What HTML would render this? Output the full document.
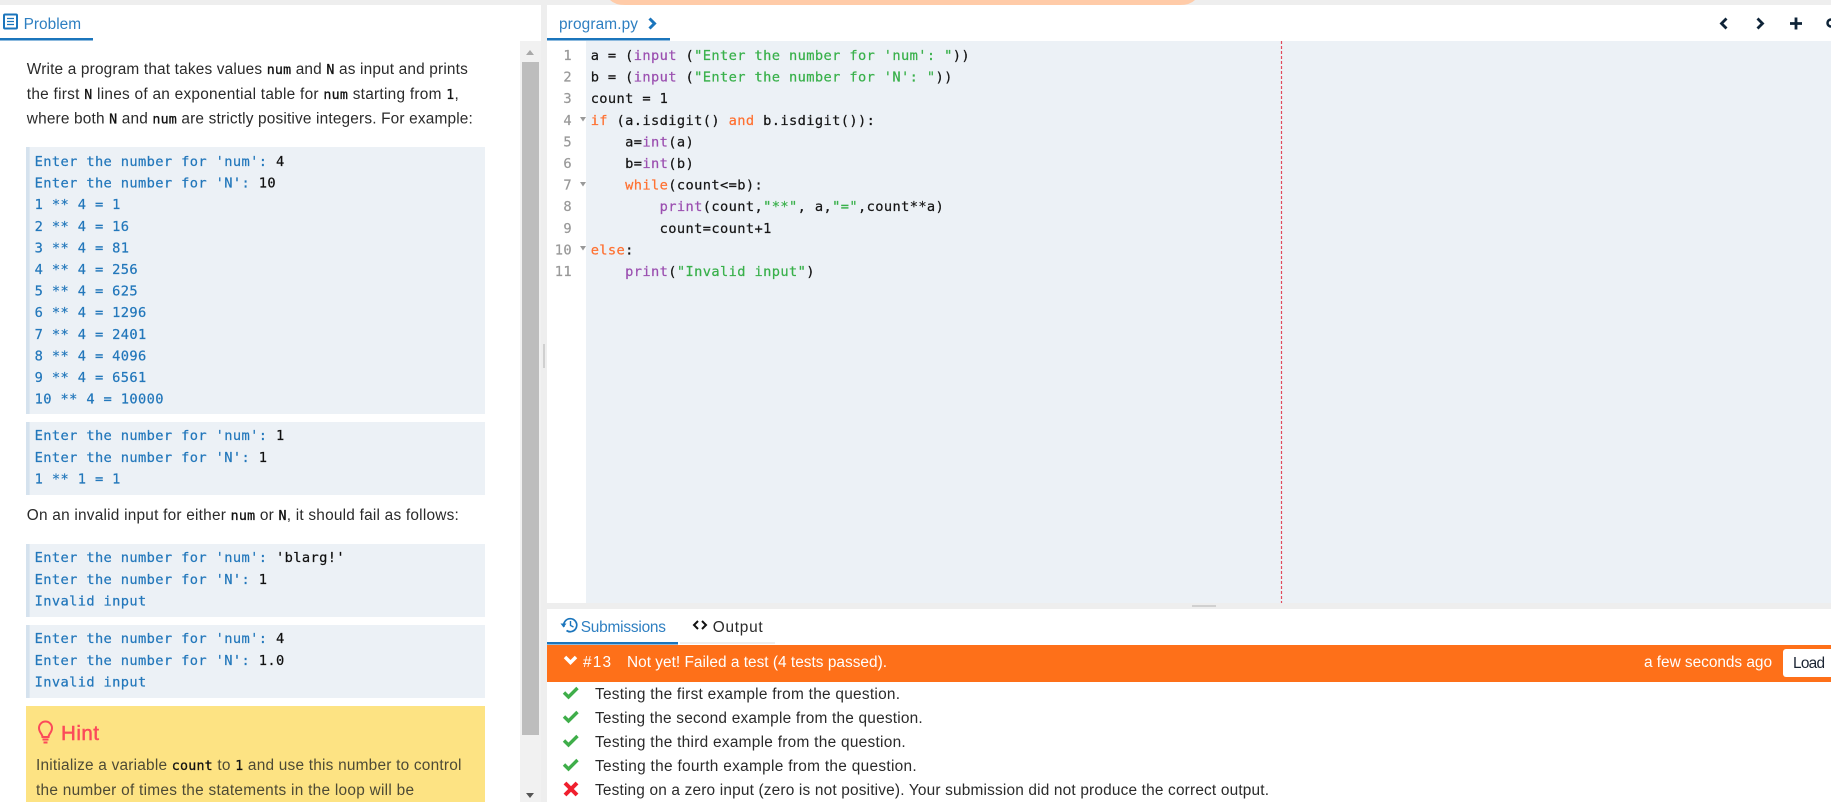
<!DOCTYPE html>
<html><head><meta charset="utf-8"><title>Problem</title>
<style>
html,body{margin:0;padding:0;background:#fff;width:1831px;height:802px;overflow:hidden}
svg{display:block}
text{white-space:pre}
.s{font-family:"Liberation Sans",sans-serif;font-size:15.4px;fill:#2a2a2a}
.c{font-family:"DejaVu Sans Mono",monospace;font-size:13.3px;fill:#111;stroke:#111;stroke-width:.3px}
.m{font-family:"DejaVu Sans Mono",monospace;font-size:13.7px;letter-spacing:.38px;stroke-width:.22px}
.p{fill:#2277bb;stroke:#2277bb}
.v{fill:#111;stroke:#111}
.e{fill:#151515;stroke:#151515}
.k{fill:#ff7030;stroke:#ff7030}
.b{fill:#9b4fb0;stroke:#9b4fb0}
.g{fill:#38b04a;stroke:#38b04a}
.n{fill:#999;stroke:#999;text-anchor:end}
.t{fill:#2e7fc1}
</style></head><body>
<svg xmlns="http://www.w3.org/2000/svg" width="1831" height="802" viewBox="0 0 1831 802">
<rect width="1831" height="802" fill="#fff"/>
<rect width="1831" height="5" fill="#eeeeee"/>
<path d="M610 0H1195Q1190 5 1180 5H625Q615 5 610 0Z" fill="#ffcba8"/>
<rect x="541" y="0" width="6" height="802" fill="#eeeeee"/>
<rect x="520" y="41" width="21" height="761" fill="#f1f1f1"/>
<rect x="522" y="62" width="17" height="673" fill="#bdbdbd"/>
<path d="M526 55l4-5 4 5z" fill="#a8a8a8"/>
<path d="M526 793l4 5 4-5z" fill="#555"/>
<rect x="543" y="344" width="2" height="24" fill="#d0d0d0"/>

<!-- Problem tab -->
<rect x="0" y="38" width="93" height="2.5" fill="#1b75bc"/>
<rect x="4" y="14.5" width="13" height="14" rx="1" fill="none" stroke="#1b75bc" stroke-width="2"/>
<path d="M7 18.5h7M7 21.5h7M7 24.5h7" stroke="#1b75bc" stroke-width="1.2" fill="none"/>
<text class="s t" x="23.6" y="29" textLength="57.5" lengthAdjust="spacing">Problem</text>

<!-- Paragraph -->
<text class="s" x="26.8" y="74" textLength="441" lengthAdjust="spacing">Write a program that takes values <tspan class="c">num</tspan> and <tspan class="c">N</tspan> as input and prints</text>
<text class="s" x="26.8" y="99" textLength="432" lengthAdjust="spacing">the first <tspan class="c">N</tspan> lines of an exponential table for <tspan class="c">num</tspan> starting from <tspan class="c">1</tspan>,</text>
<text class="s" x="26.8" y="123.5" textLength="446" lengthAdjust="spacing">where both <tspan class="c">N</tspan> and <tspan class="c">num</tspan> are strictly positive integers. For example:</text>

<!-- Pre 1 -->
<rect x="26" y="147" width="459" height="267" fill="#ecf1f6"/><rect x="26" y="147" width="3.6" height="267" fill="#d5e2ee"/>
<g class="m p">
<text x="34.6" y="166">Enter the number for 'num': <tspan class="v">4</tspan></text>
<text x="34.6" y="187.6">Enter the number for 'N': <tspan class="v">10</tspan></text>
<text x="34.6" y="209.2">1 ** 4 = 1</text>
<text x="34.6" y="230.8">2 ** 4 = 16</text>
<text x="34.6" y="252.4">3 ** 4 = 81</text>
<text x="34.6" y="274">4 ** 4 = 256</text>
<text x="34.6" y="295.6">5 ** 4 = 625</text>
<text x="34.6" y="317.2">6 ** 4 = 1296</text>
<text x="34.6" y="338.8">7 ** 4 = 2401</text>
<text x="34.6" y="360.4">8 ** 4 = 4096</text>
<text x="34.6" y="382">9 ** 4 = 6561</text>
<text x="34.6" y="403.6">10 ** 4 = 10000</text>
</g>
<!-- Pre 2 -->
<rect x="26" y="422" width="459" height="73" fill="#ecf1f6"/><rect x="26" y="422" width="3.6" height="73" fill="#d5e2ee"/>
<g class="m p">
<text x="34.6" y="440">Enter the number for 'num': <tspan class="v">1</tspan></text>
<text x="34.6" y="462">Enter the number for 'N': <tspan class="v">1</tspan></text>
<text x="34.6" y="483.5">1 ** 1 = 1</text>
</g>
<text class="s" x="26.8" y="520" textLength="432" lengthAdjust="spacing">On an invalid input for either <tspan class="c">num</tspan> or <tspan class="c">N</tspan>, it should fail as follows:</text>
<!-- Pre 3 -->
<rect x="26" y="544" width="459" height="73" fill="#ecf1f6"/><rect x="26" y="544" width="3.6" height="73" fill="#d5e2ee"/>
<g class="m p">
<text x="34.6" y="562">Enter the number for 'num': <tspan class="v">'blarg!'</tspan></text>
<text x="34.6" y="584">Enter the number for 'N': <tspan class="v">1</tspan></text>
<text x="34.6" y="605.5">Invalid input</text>
</g>
<!-- Pre 4 -->
<rect x="26" y="625" width="459" height="73" fill="#ecf1f6"/><rect x="26" y="625" width="3.6" height="73" fill="#d5e2ee"/>
<g class="m p">
<text x="34.6" y="643">Enter the number for 'num': <tspan class="v">4</tspan></text>
<text x="34.6" y="665">Enter the number for 'N': <tspan class="v">1.0</tspan></text>
<text x="34.6" y="686.5">Invalid input</text>
</g>
<!-- Hint -->
<rect x="26" y="706" width="459" height="96" fill="#fde383"/>
<path d="M42.5 737c0-3-3.500-4.500-3.500-9a6.500 6.500 0 0 1 13 0c0 4.500-3.500 6-3.500 9z" fill="none" stroke="#fb4a5a" stroke-width="2"/>
<path d="M42.500 739.500h6M43.500 742.500h4" stroke="#fb4a5a" stroke-width="2" fill="none"/>
<text x="61" y="740" textLength="38" lengthAdjust="spacing" style="font-family:'Liberation Sans',sans-serif;font-size:20.5px;fill:#fb4a5a;stroke:#fb4a5a;stroke-width:.5px">Hint</text>
<text class="s" x="36" y="770" textLength="425.400" lengthAdjust="spacing" style="fill:#4d4a35">Initialize a variable <tspan class="c">count</tspan> to <tspan class="c">1</tspan> and use this number to control</text>
<text class="s" x="36" y="795" textLength="378" lengthAdjust="spacing" style="fill:#4d4a35">the number of times the statements in the loop will be</text>

<!-- Editor -->
<rect x="547" y="38" width="123" height="2.500" fill="#1b75bc"/>
<rect x="547" y="41" width="1284" height="562" fill="#ecf1f6"/>
<rect x="547" y="41" width="39" height="562" fill="#fff"/>
<text class="s t" x="559" y="29" textLength="79" lengthAdjust="spacing">program.py</text>
<path d="M649.500 18.500l5 5-5 5" fill="none" stroke="#1b75bc" stroke-width="3"/>
<path d="M1726.500 18.500l-5 5 5 5M1757.500 18.500l5 5-5 5" fill="none" stroke="#0f2438" stroke-width="2.800"/>
<path d="M1796 17.500v12M1790 23.500h12" fill="none" stroke="#0f2438" stroke-width="2.800"/>
<circle cx="1831" cy="23" r="3.500" fill="none" stroke="#0f2438" stroke-width="2.500"/>
<path d="M1281.500 41V603" stroke="#e24a5c" stroke-width="1.200" stroke-dasharray="3 2"/>
<g class="m n">
<text x="572" y="60">1</text><text x="572" y="81.600">2</text><text x="572" y="103.200">3</text><text x="572" y="124.800">4</text><text x="572" y="146.400">5</text><text x="572" y="168">6</text><text x="572" y="189.600">7</text><text x="572" y="211.200">8</text><text x="572" y="232.800">9</text><text x="572" y="254.400">10</text><text x="572" y="276">11</text>
</g>
<path d="M580 117h6l-3 4.500zM580 182h6l-3 4.500zM580 246h6l-3 4.500z" fill="#999"/>
<g class="m e">
<text x="590.700" y="60">a = (<tspan class="b">input</tspan> (<tspan class="g">"Enter the number for 'num': "</tspan>))</text>
<text x="590.700" y="81.600">b = (<tspan class="b">input</tspan> (<tspan class="g">"Enter the number for 'N': "</tspan>))</text>
<text x="590.700" y="103.200">count = 1</text>
<text x="590.700" y="124.800"><tspan class="k">if</tspan> (a.isdigit() <tspan class="k">and</tspan> b.isdigit()):</text>
<text x="590.700" y="146.400">    a=<tspan class="b">int</tspan>(a)</text>
<text x="590.700" y="168">    b=<tspan class="b">int</tspan>(b)</text>
<text x="590.700" y="189.600">    <tspan class="k">while</tspan>(count&lt;=b):</text>
<text x="590.700" y="211.200">        <tspan class="b">print</tspan>(count,<tspan class="g">"**"</tspan>, a,<tspan class="g">"="</tspan>,count**a)</text>
<text x="590.700" y="232.800">        count=count+1</text>
<text x="590.700" y="254.400"><tspan class="k">else</tspan>:</text>
<text x="590.700" y="276">    <tspan class="b">print</tspan>(<tspan class="g">"Invalid input"</tspan>)</text>
</g>
<rect x="547" y="603" width="1284" height="6" fill="#eeeeee"/>
<rect x="1192" y="605" width="24" height="2" fill="#d0d0d0"/>

<!-- Bottom tabs -->
<rect x="547" y="642" width="131" height="2.500" fill="#1b75bc"/>
<rect x="680" y="642" width="95" height="2" fill="#eeeeee"/>
<path d="M564 627a6.500 6.500 0 1 1 2.500 3.500" fill="none" stroke="#1b75bc" stroke-width="1.700"/>
<path d="M560.500 623.500h6l-3 4z" fill="#1b75bc"/>
<path d="M570.500 621v4.500l3 1.500" fill="none" stroke="#1b75bc" stroke-width="1.400"/>
<text class="s t" x="580.700" y="632" textLength="85.300" lengthAdjust="spacing">Submissions</text>
<path d="M698 621l-4 4 4 4M702 621l4 4-4 4" fill="none" stroke="#111" stroke-width="2"/>
<text class="s" x="712.700" y="632" textLength="50" lengthAdjust="spacing">Output</text>

<rect x="547" y="645" width="1284" height="37" fill="#fe7019"/>
<path d="M565 657l5.500 5.500 5.500-5.500" fill="none" stroke="#fff" stroke-width="3.500"/>
<text class="s" x="583" y="667" textLength="28" lengthAdjust="spacing" style="fill:#fff">#13</text>
<text class="s" x="627" y="667" textLength="260" lengthAdjust="spacing" style="fill:#fff">Not yet! Failed a test (4 tests passed).</text>
<text class="s" x="1644" y="667" textLength="128" lengthAdjust="spacing" style="fill:#fff">a few seconds ago</text>
<rect x="1783" y="649" width="52" height="28" rx="3" fill="#fff"/>
<text class="s" x="1793" y="668" textLength="32" lengthAdjust="spacing" style="fill:#1a2433">Load</text>

<!-- Test results -->
<g fill="none" stroke="#3fae4a" stroke-width="3.400">
<path d="M564 692.500l4.500 4.500 9-9"/><path d="M564 716.500l4.500 4.500 9-9"/><path d="M564 740.500l4.500 4.500 9-9"/><path d="M564 764.500l4.500 4.500 9-9"/>
</g>
<path d="M565 783l12 12M577 783l-12 12" fill="none" stroke="#f01f2e" stroke-width="4"/>
<g class="s">
<text x="595" y="699" textLength="305" lengthAdjust="spacing">Testing the first example from the question.</text>
<text x="595" y="723" textLength="327.700" lengthAdjust="spacing">Testing the second example from the question.</text>
<text x="595" y="747" textLength="310.700" lengthAdjust="spacing">Testing the third example from the question.</text>
<text x="595" y="771" textLength="321.700" lengthAdjust="spacing">Testing the fourth example from the question.</text>
<text x="595" y="795" textLength="674" lengthAdjust="spacing">Testing on a zero input (zero is not positive). Your submission did not produce the correct output.</text>
</g>
</svg>
</body></html>
